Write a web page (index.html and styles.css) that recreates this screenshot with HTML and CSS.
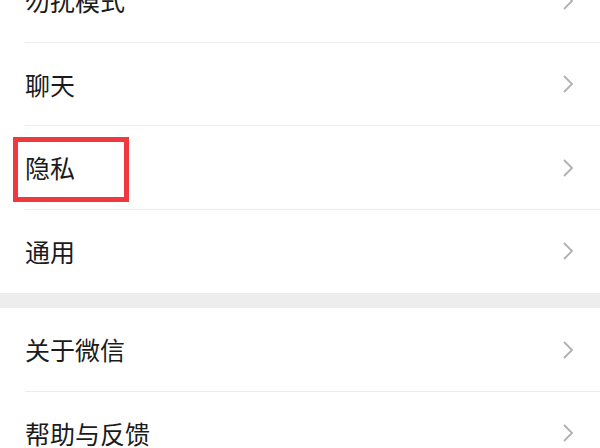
FILE: index.html
```html
<!DOCTYPE html>
<html lang="zh">
<head>
<meta charset="utf-8">
<link rel="stylesheet" href="styles.css">
</head>
<body>
<div class="page">
  <div class="group first">
    <div class="row"><span class="label">勿扰模式</span><svg class="chev" viewBox="0 0 10 18"><path d="M1 1 L9 9 L1 17"/></svg></div>
    <div class="row"><span class="label">聊天</span><svg class="chev" viewBox="0 0 10 18"><path d="M1 1 L9 9 L1 17"/></svg></div>
    <div class="row marked"><span class="label">隐私</span><svg class="chev" viewBox="0 0 10 18"><path d="M1 1 L9 9 L1 17"/></svg><div class="mark"></div></div>
    <div class="row"><span class="label">通用</span><svg class="chev" viewBox="0 0 10 18"><path d="M1 1 L9 9 L1 17"/></svg></div>
  </div>
  <div class="gap"></div>
  <div class="group">
    <div class="row"><span class="label">关于微信</span><svg class="chev" viewBox="0 0 10 18"><path d="M1 1 L9 9 L1 17"/></svg></div>
    <div class="row"><span class="label">帮助与反馈</span><svg class="chev" viewBox="0 0 10 18"><path d="M1 1 L9 9 L1 17"/></svg></div>
  </div>
</div>
</body>
</html>
```

FILE: styles.css
```css
html, body {
  margin: 0;
  padding: 0;
  background: #ffffff;
  overflow: hidden;
}
body {
  width: 600px;
  height: 448px;
  font-family: "Noto Sans CJK SC", "Noto Sans", sans-serif;
}
.page {
  margin-top: -41px;
}
.group {
  background: #ffffff;
}
.row {
  position: relative;
  height: 83.5px;
  box-sizing: border-box;
  display: flex;
  align-items: center;
  justify-content: space-between;
  padding-left: 25px;
  padding-right: 27px;
}
.row::after {
  content: "";
  position: absolute;
  left: 25px;
  right: 0;
  bottom: 0;
  height: 1px;
  background: #ececec;
}
.row:last-child::after {
  display: none;
}
.label {
  font-size: 25px;
  color: #1b1b1b;
  line-height: 1;
  letter-spacing: 0;
}
.chev {
  width: 10px;
  height: 18px;
  fill: none;
  stroke: #b0b0b0;
  stroke-width: 1.8;
}
.gap {
  height: 15px;
  background: #ededed;
}
.mark {
  position: absolute;
  left: 13px;
  top: 11px;
  width: 116px;
  height: 65px;
  box-sizing: border-box;
  border: 5px solid #f0393f;
}
```
